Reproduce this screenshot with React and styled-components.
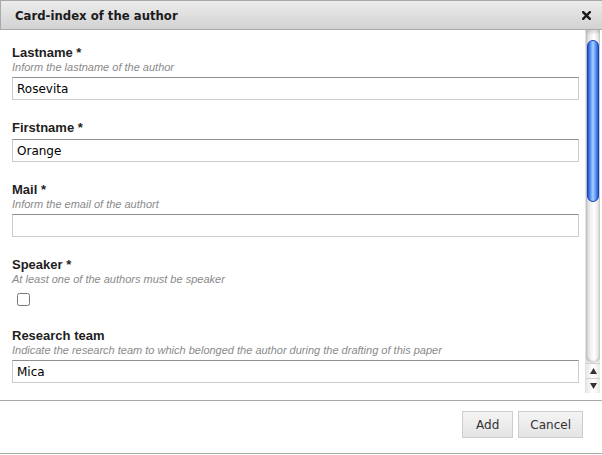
import styled, { createGlobalStyle } from "styled-components";

const GlobalStyle = createGlobalStyle`
  html, body {
    margin: 0;
    padding: 0;
    background: #ffffff;
  }
  * {
    box-sizing: border-box;
  }
`;

const Dialog = styled.div`
  width: 602px;
  height: 455px;
  display: flex;
  flex-direction: column;
  background: #ffffff;
  overflow: hidden;
`;

const TitleBar = styled.div`
  height: 30px;
  flex: none;
  display: flex;
  align-items: center;
  justify-content: space-between;
  padding: 0 11px 0 14px;
  border: 1px solid #a9a9a9;
  border-right: none;
  background: linear-gradient(#ececec, #d2d2d2);
`;

const Title = styled.span`
  font-family: "DejaVu Sans", Verdana, sans-serif;
  font-weight: bold;
  font-size: 11.7px;
  color: #1c1c1c;
  padding-top: 1px;
`;

const CloseButton = styled.button`
  border: none;
  background: none;
  padding: 0;
  width: 9px;
  height: 9px;
  display: flex;
  cursor: pointer;
`;

const Body = styled.div`
  height: 363px;
  flex: none;
  display: flex;
  padding-right: 2px;
`;

const Form = styled.div`
  flex: 1;
  overflow: hidden;
  padding: 15px 6px 0 12px;
`;

const Field = styled.div`
  margin-bottom: ${(p) => (p.$check ? "22px" : "20px")};
`;

const Label = styled.label`
  display: block;
  font-family: "Liberation Sans", Arial, sans-serif;
  font-weight: bold;
  font-size: 13px;
  line-height: 16px;
  color: #1e1e1e;
`;

const Hint = styled.div`
  font-family: "Liberation Sans", Arial, sans-serif;
  font-style: italic;
  font-size: 11px;
  line-height: 13px;
  color: #8a8a8a;
`;

const Input = styled.input`
  display: block;
  width: 100%;
  height: 23px;
  margin: 3px 0 0;
  padding: 0 4px;
  border: 1px solid #cccccc;
  border-top-color: #8f8f8f;
  font-family: "DejaVu Sans", Verdana, sans-serif;
  font-size: 12px;
  color: #000000;
  background: #ffffff;
  outline: none;
`;

const Check = styled.input`
  display: block;
  width: 13px;
  height: 13px;
  margin: 7px 0 0 5px;
`;

const ScrollBar = styled.div`
  width: 15px;
  flex: none;
  display: flex;
  flex-direction: column;
  background: linear-gradient(90deg, #dcdcdc, #f8f8f8 40%, #ffffff 60%, #e4e4e4);
  border-left: 1px solid #e2e2e2;
`;

const Track = styled.div`
  flex: 1;
  padding: 10px 1px 0;
  border-radius: 0 0 7px 7px;
  background: linear-gradient(90deg, #d2d2d2, #f2f2f2 35%, #ffffff 60%, #dadada);
  box-shadow: inset 0 -2px 2px rgba(0, 0, 0, 0.15), inset 0 3px 3px rgba(0, 0, 0, 0.12);
`;

const Thumb = styled.div`
  height: 162px;
  border-radius: 7px;
  border: 1px solid #1f3fb8;
  background: linear-gradient(90deg, #2452d8, #6aa5f4 30%, #a6d0fd 50%, #6aa5f4 70%, #2a58dc);
`;

const Arrow = styled.div`
  height: 15px;
  display: flex;
  align-items: center;
  justify-content: center;
  border-top: 1px solid #d0d0d0;
  background: linear-gradient(90deg, #e8e8e8, #ffffff 50%, #e8e8e8);
`;

const Footer = styled.div`
  margin-top: 7px;
  flex: 1;
  display: flex;
  justify-content: flex-end;
  align-items: flex-start;
  gap: 5px;
  padding: 10px 19px 0 0;
  border-top: 1px solid #aaaaaa;
  border-bottom: 1px solid #aaaaaa;
  margin-bottom: 1px;
`;

const Button = styled.button`
  height: 27px;
  padding: 0 ${(p) => p.$pad || "12px"};
  border: 1px solid #cdcdcd;
  background: linear-gradient(#f4f4f4, #e4e4e4);
  font-family: "DejaVu Sans", Verdana, sans-serif;
  font-size: 12px;
  color: #333333;
  cursor: pointer;
`;

const fields = [
  { label: "Lastname *", hint: "Inform the lastname of the author", value: "Rosevita" },
  { label: "Firstname *", value: "Orange" },
  { label: "Mail *", hint: "Inform the email of the authort", value: "" },
];

const App = () => {
  return (
    <Dialog>
      <GlobalStyle />
      <TitleBar>
        <Title>Card-index of the author</Title>
        <CloseButton aria-label="close">
          <svg width="9" height="9" viewBox="0 0 9 9">
            <path d="M1.2 1.2 L7.8 7.8 M7.8 1.2 L1.2 7.8" stroke="#1a1a1a" strokeWidth="2.4" strokeLinecap="square" />
          </svg>
        </CloseButton>
      </TitleBar>
      <Body>
        <Form>
          {fields.map((f) => (
            <Field key={f.label}>
              <Label>{f.label}</Label>
              {f.hint && <Hint>{f.hint}</Hint>}
              <Input defaultValue={f.value} />
            </Field>
          ))}
          <Field $check>
            <Label>Speaker *</Label>
            <Hint>At least one of the authors must be speaker</Hint>
            <Check type="checkbox" />
          </Field>
          <Field>
            <Label>Research team</Label>
            <Hint>Indicate the research team to which belonged the author during the drafting of this paper</Hint>
            <Input defaultValue="Mica" />
          </Field>
        </Form>
        <ScrollBar>
          <Track>
            <Thumb />
          </Track>
          <Arrow>
            <svg width="7" height="6" viewBox="0 0 7 6">
              <path d="M3.5 0 L7 6 L0 6 Z" fill="#333" />
            </svg>
          </Arrow>
          <Arrow>
            <svg width="7" height="6" viewBox="0 0 7 6">
              <path d="M0 0 L7 0 L3.5 6 Z" fill="#333" />
            </svg>
          </Arrow>
        </ScrollBar>
      </Body>
      <Footer>
        <Button $pad="13px">Add</Button>
        <Button $pad="11px">Cancel</Button>
      </Footer>
    </Dialog>
  );
};

export default App;
